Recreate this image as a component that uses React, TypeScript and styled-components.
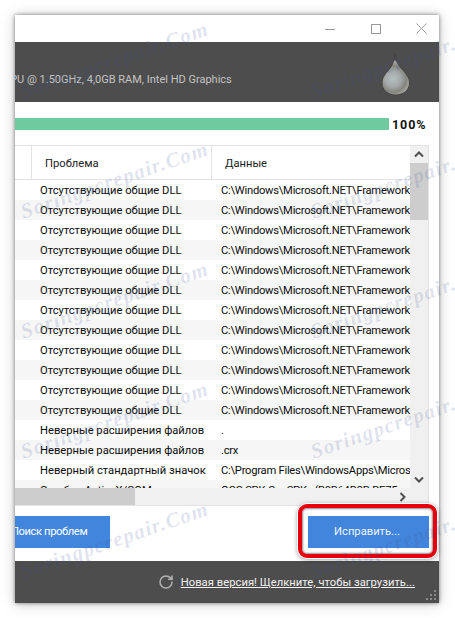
import { RotateCw } from "lucide-react";
import styled, { createGlobalStyle } from "styled-components";

const GlobalStyle = createGlobalStyle`
  html, body {
    margin: 0;
    padding: 0;
    background: #fff;
    font-family: Roboto, "Open Sans", sans-serif;
  }
`;

const DLL_PATH = "C:\\Windows\\Microsoft.NET\\Framework\\";

const ROWS = [
  ...Array.from({ length: 12 }, () => ["Отсутствующие общие DLL", DLL_PATH]),
  ["Неверные расширения файлов", "."],
  ["Неверные расширения файлов", ".crx"],
  ["Неверный стандартный значок", "C:\\Program Files\\WindowsApps\\Microsoft"],
  ["Ошибки ActiveX/COM", "OCC.SPK.CanSPK - {B0B64D3B-BE75"],
];

const DROPLET_ID = "droplet-fill";

const App = () => {
  return (
    <S.Page>
      <GlobalStyle />
      <S.Window>
        <S.TitleBar>
          <S.WinButton>
            <svg width="10" height="10" viewBox="0 0 10 10">
              <path d="M0 5.5H10" stroke="#999" strokeWidth="1" />
            </svg>
          </S.WinButton>
          <S.WinButton>
            <svg width="10" height="10" viewBox="0 0 10 10">
              <rect x="0.5" y="0.5" width="9" height="9" fill="none" stroke="#999" strokeWidth="1" />
            </svg>
          </S.WinButton>
          <S.WinButton>
            <svg width="11" height="11" viewBox="0 0 11 11">
              <path d="M0.5 0.5L10.5 10.5M10.5 0.5L0.5 10.5" stroke="#999" strokeWidth="1" />
            </svg>
          </S.WinButton>
        </S.TitleBar>

        <S.Banner>
          <S.SysInfo>CPU @ 1.50GHz, 4,0GB RAM, Intel HD Graphics</S.SysInfo>
          <svg width="30" height="44" viewBox="0 0 30 44">
            <defs>
              <radialGradient id={DROPLET_ID} gradientUnits="userSpaceOnUse" cx="12" cy="27" r="19">
                <stop offset="0" stopColor="#b6c0c0" />
                <stop offset="0.4" stopColor="#a4a9a9" />
                <stop offset="0.7" stopColor="#85857f" />
                <stop offset="0.92" stopColor="#aaaaa2" />
                <stop offset="1" stopColor="#5a5a58" />
              </radialGradient>
            </defs>
            <path
              d="M14 1C14.5 8 16.5 12 21 17C25.5 22 28.5 26 28.5 31C28.5 38 22.5 43 14.5 43C7 43 1 38 1 31C1 25.5 4 22 8 17.5C11.5 13.5 13.5 8 14 1Z"
              fill={`url(#${DROPLET_ID})`}
              stroke="#424242"
              strokeWidth="1"
            />
          </svg>
        </S.Banner>

        <S.ProgressRow>
          <S.ProgressTrack>
            <S.ProgressFill />
          </S.ProgressTrack>
          <S.Percent>100%</S.Percent>
        </S.ProgressRow>

        <S.Table>
          <S.TableMain>
            <S.TableContent>
              <S.HeaderRow>
                <S.HeaderStub />
                <S.HeaderCell $width={180}>Проблема</S.HeaderCell>
                <S.HeaderCell $width={200}>Данные</S.HeaderCell>
              </S.HeaderRow>
              {ROWS.map(([problem, data], i) => (
                <S.Row key={i} $striped={i % 2 === 1}>
                  <S.ProblemCell>{problem}</S.ProblemCell>
                  <S.DataCell>{data}</S.DataCell>
                </S.Row>
              ))}
            </S.TableContent>
            <S.VScroll>
              <S.ScrollButton>
                <svg width="10" height="7" viewBox="0 0 10 7">
                  <path d="M1 5.5L5 1.5L9 5.5" fill="none" stroke="#505050" strokeWidth="2" />
                </svg>
              </S.ScrollButton>
              <S.VThumb />
              <S.ScrollFill />
              <S.ScrollButton>
                <svg width="10" height="7" viewBox="0 0 10 7">
                  <path d="M1 1.5L5 5.5L9 1.5" fill="none" stroke="#505050" strokeWidth="2" />
                </svg>
              </S.ScrollButton>
            </S.VScroll>
          </S.TableMain>
          <S.HScroll>
            <S.HThumb />
            <S.HArrow>
              <svg width="7" height="10" viewBox="0 0 7 10">
                <path d="M1.5 1L5.5 5L1.5 9" fill="none" stroke="#505050" strokeWidth="2" />
              </svg>
            </S.HArrow>
          </S.HScroll>
        </S.Table>

        <S.Actions>
          <S.ScanButton>Поиск проблем</S.ScanButton>
          <S.FixButton>Исправить...</S.FixButton>
        </S.Actions>

        <S.Footer>
          <RotateCw size={16} color="#b4b4b4" strokeWidth={2.2} />
          <S.UpdateLink>Новая версия! Щелкните, чтобы загрузить...</S.UpdateLink>
          <S.Grip>
            <svg width="11" height="11" viewBox="0 0 11 11">
              <path
                d="M8 0h2v2H8zM4 4h2v2H4zM8 4h2v2H8zM0 8h2v2H0zM4 8h2v2H4zM8 8h2v2H8z"
                fill="#8a8a8a"
              />
            </svg>
          </S.Grip>
        </S.Footer>
      </S.Window>

      <S.Callout />

      <S.Watermarks>
        {Array.from({ length: 15 }, (_, i) => (
          <S.MarkCell key={i}>
            <S.Mark>Soringpcrepair.Com</S.Mark>
          </S.MarkCell>
        ))}
      </S.Watermarks>
    </S.Page>
  );
};

const S = {
  Page: styled.div`
    position: relative;
    width: 455px;
    height: 618px;
    padding: 15px 16px 15px 15px;
    box-sizing: border-box;
    overflow: hidden;
  `,
  Window: styled.div`
    display: flex;
    flex-direction: column;
    height: 588px;
    background: #fff;
    overflow: hidden;
    box-shadow:
      0 0 4px rgba(0, 0, 0, 0.5),
      0 1px 14px rgba(0, 0, 0, 0.18);
  `,
  TitleBar: styled.div`
    display: flex;
    justify-content: flex-end;
    align-items: center;
    height: 27px;
    padding: 0 12px 0 0;
    gap: 35px;
    flex: none;
  `,
  WinButton: styled.div`
    display: flex;
    width: 11px;
    height: 11px;
    align-items: center;
    justify-content: center;
  `,
  Banner: styled.div`
    display: flex;
    flex: none;
    align-items: flex-end;
    justify-content: space-between;
    height: 60px;
    padding: 0 28px 6px 0;
    box-sizing: border-box;
    background: #4d4d4d;
  `,
  SysInfo: styled.div`
    margin: 0 0 8px -12px;
    font-size: 11px;
    line-height: 16px;
    color: #c4c4c4;
    white-space: nowrap;
  `,
  ProgressRow: styled.div`
    display: flex;
    flex: none;
    align-items: center;
    height: 12px;
    margin: 16px 0 15px;
  `,
  ProgressTrack: styled.div`
    width: 374px;
    height: 12px;
  `,
  ProgressFill: styled.div`
    width: 100%;
    height: 100%;
    background: #6fcb9f;
  `,
  Percent: styled.div`
    margin-left: 3px;
    font-size: 12.5px;
    font-weight: 700;
    letter-spacing: 0.9px;
    color: #111;
  `,
  Table: styled.div`
    display: flex;
    flex-direction: column;
    flex: none;
    width: 414px;
    height: 361px;
    box-sizing: border-box;
    border: 1px solid #e3e3e3;
    border-left: 0;
  `,
  TableMain: styled.div`
    display: flex;
    flex: 1;
    min-height: 0;
  `,
  TableContent: styled.div`
    width: 395px;
    overflow: hidden;
    flex: none;
  `,
  HeaderRow: styled.div`
    display: flex;
    height: 34px;
    box-sizing: border-box;
    border-bottom: 1px solid #e3e3e3;
  `,
  HeaderStub: styled.div`
    width: 16px;
    flex: none;
    border-right: 1px solid #e3e3e3;
  `,
  HeaderCell: styled.div<{ $width: number }>`
    width: ${(p) => p.$width}px;
    flex: none;
    padding-left: 13px;
    box-sizing: border-box;
    border-right: 1px solid #e3e3e3;
    font-size: 11.2px;
    line-height: 35px;
    color: #222;

    &:last-child {
      border-right: 0;
    }
  `,
  Row: styled.div<{ $striped: boolean }>`
    display: flex;
    height: 20px;
    padding-left: 25px;
    background: ${(p) => (p.$striped ? "#f6f6f6" : "#fff")};
  `,
  ProblemCell: styled.div`
    width: 181px;
    flex: none;
    font-size: 11.2px;
    line-height: 21px;
    color: #0c0c0c;
    white-space: nowrap;
  `,
  DataCell: styled.div`
    width: 190px;
    flex: none;
    overflow: hidden;
    font-size: 11.2px;
    line-height: 21px;
    letter-spacing: -0.25px;
    color: #0c0c0c;
    white-space: nowrap;
  `,
  VScroll: styled.div`
    display: flex;
    flex-direction: column;
    flex: 1;
    background: #f0f0f0;
  `,
  ScrollButton: styled.div`
    display: flex;
    flex: none;
    align-items: center;
    justify-content: center;
    height: 17px;
  `,
  VThumb: styled.div`
    flex: none;
    height: 57px;
    background: #cdcdcd;
  `,
  ScrollFill: styled.div`
    flex: 1;
  `,
  HScroll: styled.div`
    display: flex;
    flex: none;
    align-items: center;
    height: 17px;
    background: #f0f0f0;
  `,
  HThumb: styled.div`
    width: 120px;
    height: 100%;
    background: #cdcdcd;
  `,
  HArrow: styled.div`
    display: flex;
    margin-left: 264px;
  `,
  Actions: styled.div`
    display: flex;
    flex: none;
    justify-content: space-between;
    width: 414px;
    height: 32px;
    margin: 10px 0 13px;
  `,
  ScanButton: styled.div`
    width: 95px;
    overflow: hidden;
    text-indent: -4px;
    font-size: 11.2px;
    line-height: 32px;
    letter-spacing: -0.4px;
    color: #fff;
    white-space: nowrap;
    background: #4285dc;
  `,
  FixButton: styled.div`
    width: 121px;
    padding-right: 3px;
    box-sizing: border-box;
    font-size: 11.2px;
    line-height: 32px;
    text-align: center;
    color: #f0f4fa;
    background: #4285dc;
  `,
  Footer: styled.div`
    position: relative;
    display: flex;
    flex: 1;
    align-items: center;
    justify-content: flex-end;
    gap: 7px;
    padding: 0 24px 0 0;
    background: #4d4d4d;
  `,
  UpdateLink: styled.a`
    font-size: 11.2px;
    letter-spacing: 0.05px;
    color: #f2f2f2;
    text-decoration: underline;
    white-space: nowrap;
  `,
  Grip: styled.div`
    position: absolute;
    right: 2px;
    bottom: 2px;
    display: flex;
  `,
  Callout: styled.div`
    position: absolute;
    left: 298px;
    top: 504px;
    width: 139px;
    height: 54px;
    box-sizing: border-box;
    border: 4px solid #e8000c;
    border-radius: 9px;
    box-shadow:
      0 0 0 1px #fff,
      0 1px 4px 1px rgba(0, 0, 0, 0.35),
      inset 0 0 2px 1px rgba(0, 0, 0, 0.45);
  `,
  Watermarks: styled.div`
    position: absolute;
    top: 0;
    left: 0;
    display: grid;
    grid-template-columns: repeat(3, 290px);
    grid-auto-rows: 120px;
    pointer-events: none;
  `,
  MarkCell: styled.div`
    display: flex;
    align-items: center;
    justify-content: center;
    width: 230px;
    height: 120px;
  `,
  Mark: styled.div`
    transform: rotate(-19deg);
    font-family: "Liberation Serif", serif;
    font-size: 21px;
    font-style: italic;
    font-weight: 700;
    letter-spacing: 1.2px;
    color: rgba(62, 82, 150, 0.16);
    white-space: nowrap;
  `,
};

export default App;
